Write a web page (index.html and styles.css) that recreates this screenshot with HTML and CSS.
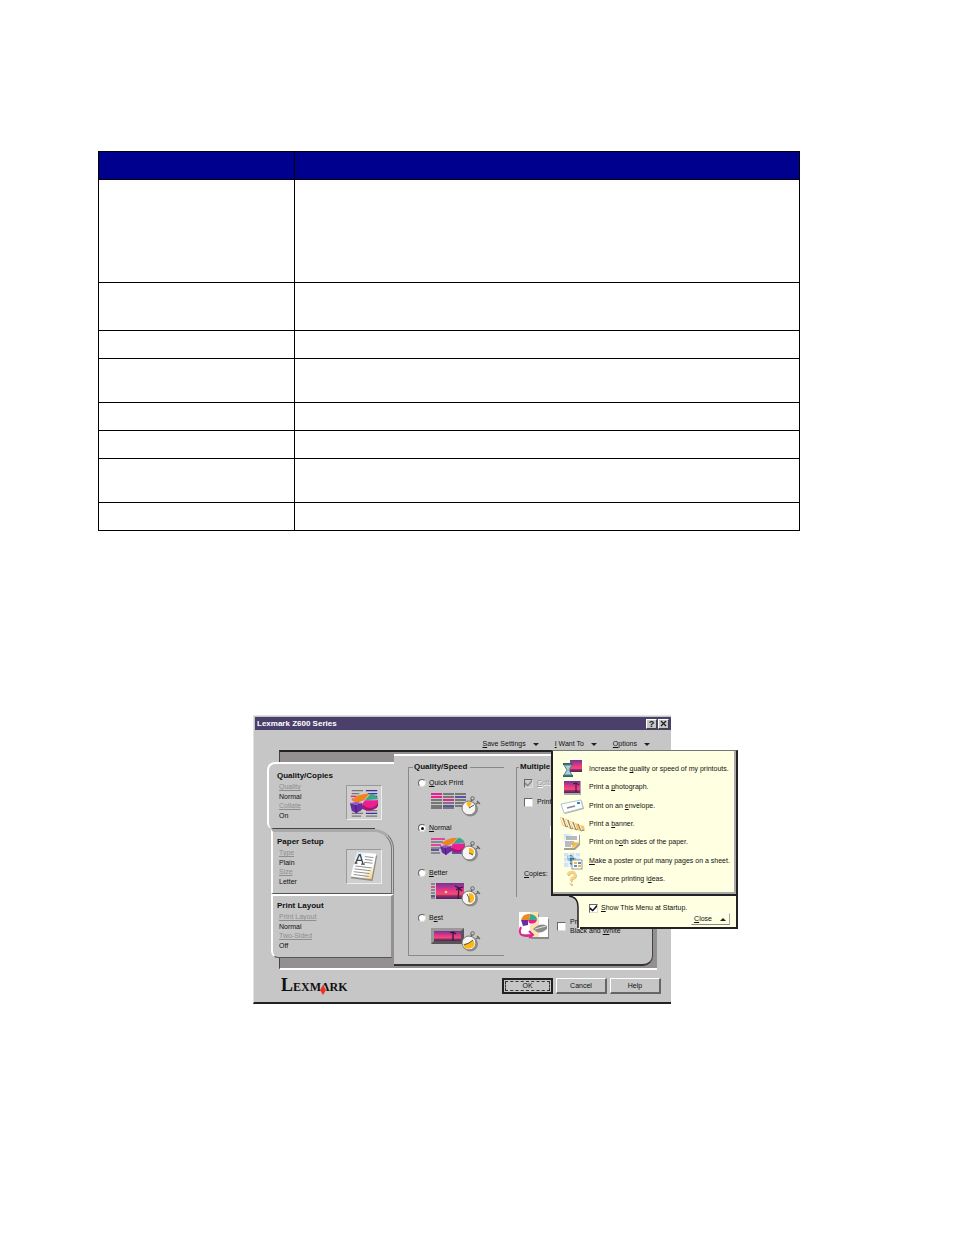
FILE: index.html
```html
<!DOCTYPE html>
<html lang="en">
<head>
<meta charset="utf-8">
<title>Lexmark Z600 Series</title>
<link rel="stylesheet" href="styles.css">
</head>
<body>
<main class="page">
<table class="grid">
<colgroup><col class="col-first"><col></colgroup>
<thead><tr><th></th><th></th></tr></thead>
<tbody>
<tr class="row-tall"><td></td><td></td></tr>
<tr class="row-large"><td></td><td></td></tr>
<tr><td></td><td></td></tr>
<tr class="row-medium"><td></td><td></td></tr>
<tr><td></td><td></td></tr>
<tr><td></td><td></td></tr>
<tr class="row-medium"><td></td><td></td></tr>
<tr><td></td><td></td></tr>
</tbody>
</table>

<svg class="defs" width="0" height="0" aria-hidden="true">
<defs>
<linearGradient id="sky" x1="0" y1="0" x2="0" y2="1"><stop offset="0" stop-color="#6b3a8e"/><stop offset=".4" stop-color="#e0328f"/><stop offset=".7" stop-color="#f0506a"/><stop offset=".8" stop-color="#9a2a6c"/><stop offset="1" stop-color="#4a2560"/></linearGradient>
<linearGradient id="paper" x1="0" y1="0" x2="1" y2="1"><stop offset="0" stop-color="#b9dcf4"/><stop offset=".4" stop-color="#fff"/><stop offset=".65" stop-color="#fff"/><stop offset="1" stop-color="#f5b93c"/></linearGradient>
<symbol id="watch" viewBox="0 0 20 24">
<circle cx="9.500" cy="16" r="7.500" fill="#8e8e8e"/>
<circle cx="8" cy="15" r="7" fill="#f5f5f5" stroke="#777" stroke-width="1"/>
<circle cx="11.500" cy="5.500" r="1.800" fill="none" stroke="#666" stroke-width="1"/>
<path d="M10 9l1-3M15 11l3-2M16 8l3 3" stroke="#666" stroke-width="1.300" fill="none"/>
</symbol>
<symbol id="pie" viewBox="0 0 30 22">
<path d="M13 13l17-5v6q-2 4-8 5-6 0-9-2z" fill="#a81671"/>
<path d="M2 8Q8 1 21 1l-6 7-8 3z" fill="#ef8420"/>
<path d="M22 1q6 1 8 6l-14 1z" fill="#3aa88a"/>
<path d="M16 8h14q1 5-6 8-6 1-11-4z" fill="#ea1f92"/>
<path d="M0 11l6 2 7-2 1 6-7 5-5-3z" fill="#6a2ca0"/><path d="M0 11l6 2 7-2-6-1z" fill="#9656c4"/><path d="M6 13l1 9" stroke="#4a1a78"/>
</symbol>
<symbol id="photo" viewBox="0 0 28 16">
<rect width="28" height="16" fill="url(#sky)"/>
<path d="M22 16l1-11M23 5l-4-2M23 5l4-1M23 5l-3 2M23 5l3 3" stroke="#2a173d" stroke-width="1.200" fill="none"/>
<circle cx="10" cy="9" r="1.300" fill="#ffd070"/>
</symbol>
</defs>
</svg>

<section class="dialog" aria-label="Lexmark Z600 Series">
<header class="titlebar">
<h1>Lexmark Z600 Series</h1>
<button class="caption-btn" type="button">?</button>
<button class="caption-btn" type="button" aria-label="Close window"><svg width="7" height="7" viewBox="0 0 7 7"><path d="M1 1l5 5M6 1L1 6" stroke="#222" stroke-width="1.300"/></svg></button>
</header>
<nav class="menu">
<button type="button"><span><u>S</u>ave Settings</span><i class="arrow-down"></i></button>
<button type="button"><span><u>I</u> Want To</span><i class="arrow-down"></i></button>
<button type="button"><span><u>O</u>ptions</span><i class="arrow-down"></i></button>
</nav>

<div class="stage">
<div class="well"></div>
<div class="content">
<ul class="rail">
<li><div class="tab tab-active">
<div><h2>Quality/Copies</h2>
<dl><dt><a href="#quality">Quality</a></dt><dd>Normal</dd><dt><a href="#collate">Collate</a></dt><dd>On</dd></dl></div>
<svg class="tab-icon" width="36" height="35" viewBox="0 0 36 35"><path d="M5 5h12M5 8h8M5 14h4M5 26h10M5 29h12M5 32h10" stroke="#777" stroke-width="1.300"/><path d="M20 5h12M22 8h10M25 11h7M20 29h12" stroke="#3b2fa0" stroke-width="1.300"/><path d="M4 11h6" stroke="#ea1f92" stroke-width="1.500"/><path d="M20 26h12M20 32h12" stroke="#777" stroke-width="1.300"/><use href="#pie" x="3" y="7" width="30" height="22"/></svg>
</div></li>
<li><div class="tab tab-second">
<div><h2>Paper Setup</h2>
<dl><dt><a href="#type">Type</a></dt><dd>Plain</dd><dt><a href="#size">Size</a></dt><dd>Letter</dd></dl></div>
<svg class="tab-icon" width="36" height="35" viewBox="0 0 36 35"><path d="M11 4l21 2-5 27-23-3z" fill="#8c8c8c"/><path d="M10 2l21 2-5 27-22-3z" fill="url(#paper)"/><path d="M19 7l9 1M19 10l8 1M18 13l9 1M9 17l17 2M8 20l17 2M7 23l17 2M7 26l16 2" stroke="#8a8a8a"/><path d="M9 14l4-9h1l3 10M11 11h5M8 14h3M15 15h4" stroke="#444" stroke-width="1.400" fill="none"/></svg>
</div></li>
<li><div class="tab tab-third">
<div><h2>Print Layout</h2>
<dl><dt><a href="#layout">Print Layout</a></dt><dd>Normal</dd><dt><a href="#sides">Two-Sided</a></dt><dd>Off</dd></dl></div>
</div></li>
</ul>

<form class="panel">
<fieldset class="group group-speed">
<legend>Quality/Speed</legend>
<div class="choice"><label><input type="radio" name="speed"><span><u>Q</u>uick Print</span></label>
<svg width="52" height="30" viewBox="0 0 52 30"><path d="M1 5h11M1 8h11" stroke="#ea1f92" stroke-width="2"/><path d="M1 11h11M1 14h11M1 17h11M1 19h11M13 5h11M13 8h11M13 14h11M13 19h11M25 5h11M25 11h11M25 14h11M25 17h8" stroke="#777" stroke-width="2"/><path d="M13 11h11" stroke="#ea1f92" stroke-width="2"/><path d="M13 17h11M25 8h11" stroke="#3b2fa0" stroke-width="1.500"/><use href="#watch" x="31" y="4" width="20" height="24"/><path d="M39 19l-3-5q3-2 6 0z" fill="#fdb913"/><path d="M39 19l5-3" stroke="#555"/></svg></div>
<div class="choice"><label><input type="radio" name="speed" checked><span><u>N</u>ormal</span></label>
<svg width="52" height="30" viewBox="0 0 52 30"><path d="M1 5h14M1 11h10" stroke="#ea1f92" stroke-width="1.500"/><path d="M1 8h12M1 14h10M1 19h9" stroke="#777" stroke-width="1.500"/><path d="M1 16h8M22 19h12" stroke="#3b2fa0" stroke-width="1.500"/><use href="#pie" x="9" y="3" width="27" height="18"/><use href="#watch" x="31" y="4" width="20" height="24"/><path d="M39 19v-5q5 0 5 5l-1 2z" fill="#fdb913"/><path d="M39 19l4 2" stroke="#555"/></svg></div>
<div class="choice"><label><input type="radio" name="speed"><span><u>B</u>etter</span></label>
<svg width="52" height="30" viewBox="0 0 52 30"><path d="M1 5h4M1 11h4M1 14h4M1 19h4" stroke="#777" stroke-width="1.500"/><path d="M1 8h4" stroke="#ea1f92" stroke-width="1.500"/><path d="M1 17h4" stroke="#3b2fa0" stroke-width="1.500"/><use href="#photo" x="6" y="4" width="28" height="16"/><use href="#watch" x="31" y="4" width="20" height="24"/><path d="M39 14q5 0 5 5t-5 5z" fill="#fdb913"/><path d="M39 19l-2-4M39 19v4" stroke="#555"/></svg></div>
<div class="choice"><label><input type="radio" name="speed"><span>B<u>e</u>st</span></label>
<svg width="52" height="30" viewBox="0 0 52 30"><rect x="1" y="4" width="33" height="16" fill="#555"/><path d="M1 4h33l-3 3H4v10l-3 3z" fill="#999"/><rect x="4" y="7" width="27" height="10" fill="url(#sky)"/><path d="M23 17V9M20 9l3-1 3 2" stroke="#2a173d" stroke-width="1.300" fill="none"/><use href="#watch" x="31" y="4" width="20" height="24"/><path d="M33 20l6-1 4-3q3 4 0 7-4 3-8 1z" fill="#fdb913"/><path d="M34 21l5-2 4-3" stroke="#555" fill="none"/></svg></div>
</fieldset>
<div class="side">
<fieldset class="group group-copies">
<legend>Multiple</legend>
<label class="check"><input type="checkbox" checked disabled><span><u>C</u>olla</span></label>
<label class="check"><input type="checkbox"><span>Print</span></label>
<div class="sheet"></div>
<p class="copies"><u>C</u>opies:</p>
</fieldset>
<div class="mono">
<svg width="32" height="30" viewBox="0 0 32 30"><rect x="2" y="3" width="19" height="21" fill="#999"/><rect x="1" y="1" width="19" height="22" fill="#fff"/><rect x="13" y="8" width="18" height="20" fill="#888"/><path d="M12 1h8v5h-8z" fill="#fbe2b4"/><rect x="12" y="6" width="18" height="20" fill="#fff"/><path d="M12 6h9v20h-9z" fill="#fbe2b4"/><path d="M3 9q2-7 9-6l-1 6z" fill="#f08a1d"/><path d="M12 3q7 1 7 6l-8 0z" fill="#3aa88a"/><path d="M10 9h9q-2 5-8 3z" fill="#ea1f92"/><path d="M3 9h7v5l-5 1z" fill="#6a2ca0"/><path d="M3 16q-4 9 6 9l5-1M11 20l4 4-4 3" fill="none" stroke="#ea1f92" stroke-width="2"/><path d="M15 18q8-7 14-3v3q-6 5-10 3z" fill="#8b8b8b"/><path d="M17 18l11-3" stroke="#ddd"/></svg>
<label class="check"><input type="checkbox"><span>Print<br>Black and <u>W</u>hite</span></label>
</div>
</div>
</form>
</div>
</div>

<footer class="footer">
<div class="logo"><span class="logo-cap">L</span>EXMΛRK<svg class="logo-gem" width="6" height="10" viewBox="0 0 6 10"><path d="M3 0l3 5-3 5-3-5z" fill="#ee3124"/></svg></div>
<button class="btn btn-default" type="button"><span>OK</span></button>
<button class="btn" type="button">Cancel</button>
<button class="btn" type="button">Help</button>
</footer>

<aside class="popup">
<ul class="ideas">
<li><svg width="28" height="18" viewBox="0 0 28 18"><rect x="11" y="0" width="12" height="12" fill="url(#sky)"/><path d="M4 3h10v2H4zM4 15h10v2H4z" fill="#35606e"/><path d="M5 5h8l-3 5 3 5H5l3-5z" fill="#a7d2dc" stroke="#55808c"/></svg><a href="#speed">Increase the <u>q</u>uality or speed of my printouts.</a></li>
<li><svg width="28" height="18" viewBox="0 0 28 18"><rect x="5" y="3" width="17" height="14" fill="#aaa"/><rect x="5" y="3" width="16" height="12" fill="url(#sky)"/><path d="M17 14V6M14 6l3-1 3 2" stroke="#2a173d" fill="none"/></svg><a href="#photo-idea">Print a <u>p</u>hotograph.</a></li>
<li><svg width="28" height="18" viewBox="0 0 28 18"><path d="M3 8l20-4 2 8-19 5z" fill="#b9b29a"/><path d="M2 7l20-4 2 8-19 5z" fill="#fff" stroke="#aac4da"/><path d="M8 11l8-2" stroke="#888" stroke-width="1.500"/><path d="M18 5h3v2h-3z" fill="#3a80c0"/></svg><a href="#envelope">Print on an <u>e</u>nvelope.</a></li>
<li><svg width="28" height="18" viewBox="0 0 28 18"><path d="M1 2l4 1 2 9-4-2zM6 4l4 1 2 9-4-2zM11 6l4 1 2 8-4-1zM16 8l4 1 2 7-4-1zM21 10l4 1 1 5-3-1z" fill="#f5c56a"/><path d="M4 3l3 9 2-1M9 5l3 9 2-1M14 7l3 8 2-1M19 9l3 7 3-1" fill="none" stroke="#85817a"/><path d="M2 3l3 7M7 5l3 7M12 7l3 6" stroke="#fff"/></svg><a href="#banner">Print a <u>b</u>anner.</a></li>
<li><svg width="28" height="18" viewBox="0 0 28 18"><path d="M6 2h15v10l-5 5H5z" fill="#a39f91"/><path d="M5 1h15v9l-5 5H4z" fill="url(#paper)"/><path d="M7 4h11M7 6h11M6 9h9M6 11h8M6 13h6" stroke="#777"/><path d="M13 15l1-6 6 1z" fill="#f5b93c"/></svg><a href="#both">Print on b<u>o</u>th sides of the paper.</a></li>
<li><svg width="28" height="18" viewBox="0 0 28 18"><rect x="5" y="1" width="16" height="14" fill="#cfe6f2"/><path d="M8 4l4-1 5 3v4l-3 4-3-2-2-4z" fill="#2f7199"/><path d="M10 1v14M16 1v14M5 5h16M5 10h16" stroke="#fff"/><rect x="13" y="8" width="10" height="9" fill="#fff" stroke="#999"/><path d="M15 10h3v2h-3zM19 13h3v2h-3z" fill="#f5b93c"/><path d="M19 10h3v2h-3zM15 13h3v2h-3z" fill="#5a91b4"/></svg><a href="#poster"><u>M</u>ake a poster or put many pages on a sheet.</a></li>
<li><svg width="28" height="18" viewBox="0 0 28 18"><path d="M10 6q0-3 3-3t4 3q0 2-3 3-2 1-1 3M13 14v2" fill="none" stroke="#c9c0a6" stroke-width="2"/><path d="M9 5q0-3 4-3 3 0 3 3t-3 3q-1 1-1 3M12 13v2" fill="none" stroke="#fbd27d" stroke-width="2.500"/></svg><a href="#more">See more printing i<u>d</u>eas.</a></li>
</ul>
<div class="startup">
<svg class="startup-edge" width="11" height="33" viewBox="0 0 11 33"><path d="M0 0q9 1 9 11v22h2V0z" fill="#ffffe1"/><path d="M0 0q9 1 9 11v21" fill="none" stroke="#222" stroke-width="1.500"/></svg>
<div class="startup-body">
<label class="check"><input type="checkbox" checked><span><u>S</u>how This Menu at Startup.</span></label>
<button class="close-btn" type="button"><span><u>C</u>lose</span><i class="arrow-up"></i></button>
</div>
</div>
</aside>
</section>
</main>
</body>
</html>
```
FILE: styles.css
```css
* { box-sizing: border-box; }
body { margin: 0; background: #fff; color: #222; }
.page { padding: 151px 154px 232px 98px; }
.defs { position: absolute; }

.grid { width: 100%; border-collapse: collapse; table-layout: fixed; }
.col-first { width: 196px; }
.grid tr { height: 28px; }
.grid th, .grid td { border: 1px solid #000; padding: 0; }
.grid th { background: #00008f; }
.grid .row-tall { height: 103px; }
.grid .row-large { height: 48px; }
.grid .row-medium { height: 44px; }

.dialog {
  position: relative;
  width: 100%;
  max-width: 418px;
  margin: 184px 0 0 155px;
  padding-top: 1px;
  background: #c6c6c6;
  border: 1px solid #e2e2e2;
  border-right: 0;
  border-bottom: 2px solid #222;
  color: #111;
  font-family: "Liberation Sans", sans-serif;
  font-size: 7px;
  line-height: 10px;
}
.dialog button { font: inherit; color: #111; }
.dialog a { color: inherit; }
h1, h2, p, dl, dd, ul { margin: 0; padding: 0; }
ul { list-style: none; }
svg { display: block; flex: none; }

.titlebar { display: flex; align-items: center; gap: 1px; height: 13px; margin-left: 1px; padding: 0 2px; background: #4b3f6b; color: #fff; }
.titlebar h1 { flex: 1; font: bold 8px/12px "Liberation Sans", sans-serif; }
.caption-btn {
  display: flex; align-items: center; justify-content: center;
  width: 11px; height: 10px; padding: 0;
  background: #c6c6c6; border: 1px solid #fff; border-right-color: #444; border-bottom-color: #444;
}
.dialog .caption-btn { font-size: 9px; font-weight: bold; }

.menu { display: flex; justify-content: flex-end; align-items: center; gap: 16px; height: 20px; padding: 8px 21px 0 0; }
.menu button { display: flex; align-items: center; gap: 7px; padding: 0; background: none; border: 0; }
.arrow-down { border: 3px solid transparent; border-top-color: #222; border-bottom: 0; }
.arrow-up { border: 3px solid transparent; border-bottom-color: #222; border-top: 0; }

.stage { display: grid; margin: 0 14px 0 13px; }
.well { grid-area: 1 / 1; margin-left: 12px; background: #949092; border: 2px solid #222; border-right: 0; border-bottom: 2px solid #fff; border-left: 1px solid #444; }
.content { grid-area: 1 / 1; display: flex; }

.rail { width: 127px; padding: 12px 0; }
.rail li { background: #c6c6c6; }
.rail li:first-child { background: linear-gradient(#949092, #949092) 12px 0 / 115px 8px no-repeat #c6c6c6; }
.rail li:last-child { background: linear-gradient(#949092, #949092) 12px 100% / 115px 8px no-repeat #c6c6c6; }
.tab {
  display: flex; justify-content: space-between;
  margin-left: 4px; padding: 4px 12px 7px 4px;
  background: #c6c6c6; border: 2px solid #fff; border-right: 0; border-bottom: 1px solid #555;
}
.tab h2, .group legend { font: bold 8px/12px "Liberation Sans", sans-serif; }
.tab dl { padding-left: 2px; }
.tab dt { line-height: 10px; color: #8e8e8e; }
.tab dd { line-height: 9px; }
.tab-active {
  margin-left: 0; padding: 6px 10px 9px 8px; border-bottom: 0; border-radius: 8px 0 0 6px;
  background: linear-gradient(#444, #444) 0 100% / 106px 1px no-repeat #c6c6c6;
}
.tab-icon { margin-top: 13px; background: #cfcfcf; border: 1px solid #999; border-right-color: #eee; border-bottom-color: #eee; }
.tab-active .tab-icon { margin-top: 15px; margin-right: 2px; }
.tab-second { padding-right: 9px; border-top: 3px solid #aaa; border-right: 3px double #777; border-radius: 0 20px 0 0; border-bottom-color: #555; }
.tab-third { border-right: 3px solid #949092; border-radius: 0 0 0 7px; }

.panel {
  flex: 1; display: flex; gap: 12px;
  margin: 4px 4px 4px 0; padding: 5px 0 0 14px;
  background: #c6c6c6;
  border-top: 2px solid #fff; border-right: 1px solid #444; border-bottom: 2px solid #333;
  border-bottom-right-radius: 10px;
  min-width: 0;
}
.group { min-width: 0; width: 96px; margin: 0; padding: 5px 0 0 9px; border: 1px solid #8a8a8a; border-right: 0; align-self: flex-start; }
.group legend { margin-left: -5px; padding: 0 3px 0 1px; }
.group-speed { height: 195px; }
.choice { height: 45px; }
.choice label, .check { display: flex; gap: 3px; align-items: center; }
.choice svg { margin: 1px 0 0 12px; }

input { appearance: none; flex: none; display: grid; place-items: center; margin: 0; width: 9px; height: 9px; background: #fff; border: 1px solid #666; border-right-color: #ddd; border-bottom-color: #ddd; }
input[type="radio"] { width: 8px; height: 8px; border-radius: 50%; }
input[type="radio"]:checked::before { content: ""; width: 3px; height: 3px; border-radius: 50%; background: #111; }
input[type="checkbox"]:checked::before { content: ""; width: 7px; height: 7px; background: #111; clip-path: polygon(0 40%, 40% 70%, 100% 0, 100% 35%, 40% 100%, 0 70%); }
input:disabled { background: #ccc; }
input[type="checkbox"]:disabled::before { background: #888; }
input:disabled + span { color: #999; text-shadow: 1px 1px #fff; }

.side { flex: 1; min-width: 0; }
.group-copies { width: 100%; padding: 5px 0 0 7px; border-bottom: 0; height: 136px; }
.group-copies .check { gap: 4px; margin-bottom: 9px; }
.sheet { width: 30px; height: 12px; margin: 19px 0 0 26px; background: #fff; }
.copies { margin-top: 31px; }
.mono { display: flex; align-items: center; gap: 7px; padding: 14px 0 0 2px; }
.mono .check { gap: 4px; line-height: 9px; }

.footer { display: flex; align-items: center; gap: 3px; padding: 7px 10px 7px 27px; }
.logo { position: relative; margin-right: auto; font: bold 12px/16px "Liberation Serif", serif; }
.logo-cap { font-size: 18px; }
.logo-gem { position: absolute; left: 39px; bottom: 0; }
.btn { width: 51px; height: 16px; padding: 0; background: #c6c6c6; border: 1px solid #fff; border-right: 2px solid #666; border-bottom: 2px solid #666; }
.btn-default { padding: 1px; border: 2px solid #222; }
.btn-default span { display: block; line-height: 8px; border: 1px dashed #333; }

.popup { position: absolute; top: 34px; left: 297px; width: 187px; }
.ideas {
  display: grid; grid-template-rows: repeat(7, 1fr); height: 146px; padding: 9px 0 6px 6px;
  background: #ffffe1; border: 2px solid #222; border-top: 1px solid #777;
  box-shadow: inset -2px -2px #aaa;
}
.ideas li { display: flex; align-items: center; gap: 2px; white-space: nowrap; }
.ideas a { text-decoration: none; }
.startup { display: flex; margin-left: 18px; }
.startup-body { flex: 1; display: flex; flex-direction: column; height: 33px; padding: 7px 6px 0 9px; background: #ffffe1; border-right: 2px solid #222; border-bottom: 2px solid #222; }
.close-btn { align-self: flex-end; display: flex; align-items: center; gap: 8px; height: 12px; padding: 0 3px 0 2px; background: none; border: 1px solid #fff; border-right-color: #aaa; border-bottom-color: #888; }
```
